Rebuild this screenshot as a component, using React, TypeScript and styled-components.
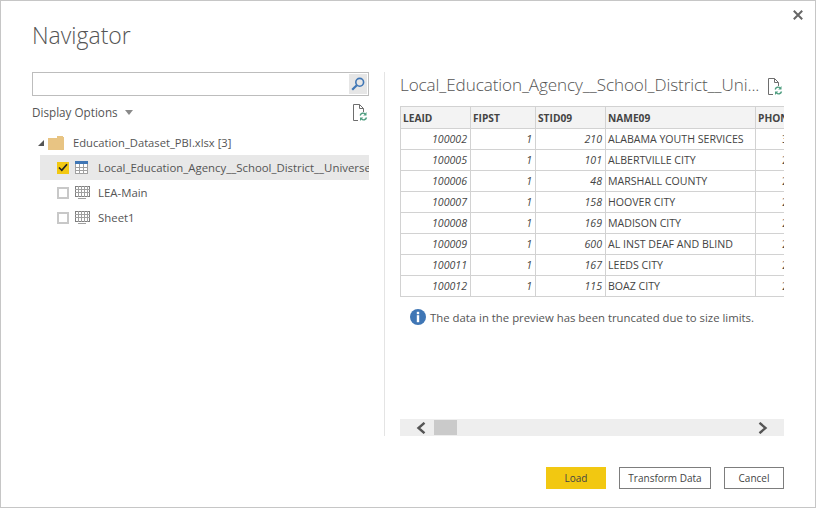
import React from "react";
import styled, { createGlobalStyle } from "styled-components";

const GlobalStyle = createGlobalStyle`
  html, body { margin: 0; padding: 0; background: #fff; }
  * { box-sizing: border-box; }
`;

const rows = [
  ["100002", "1", "210", "ALABAMA YOUTH SERVICES", "3"],
  ["100005", "1", "101", "ALBERTVILLE CITY", "2"],
  ["100006", "1", "48", "MARSHALL COUNTY", "2"],
  ["100007", "1", "158", "HOOVER CITY", "2"],
  ["100008", "1", "169", "MADISON CITY", "2"],
  ["100009", "1", "600", "AL INST DEAF AND BLIND", "2"],
  ["100011", "1", "167", "LEEDS CITY", "2"],
  ["100012", "1", "115", "BOAZ CITY", "2"],
];

const RefreshDoc = () => (
  <svg width="16" height="18" viewBox="0 0 16 18" fill="none">
    <path d="M6 16.5H1.5V0.5H7.5L11.5 4.5V8" stroke="#6e6e6e" />
    <path d="M7.5 0.5V4.5H11.5" stroke="#6e6e6e" />
    <path d="M8.2 11.5a3 3 0 0 1 5-1.5" stroke="#4f9e80" strokeWidth="1.4" />
    <path d="M14.5 8V11.5H11.2" fill="#4f9e80" />
    <path d="M14.5 13.5a3 3 0 0 1-5 1.5" stroke="#4f9e80" strokeWidth="1.4" />
    <path d="M8 17V13.5H11.3" fill="#4f9e80" />
  </svg>
);

const TableIcon = ({ selected }: { selected?: boolean }) =>
  selected ? (
    <svg width="13" height="13" viewBox="0 0 13 13" fill="none">
      <rect x="0.5" y="0.5" width="12" height="12" fill="#fff" stroke="#a0a0a0" />
      <rect x="0" y="0" width="13" height="3" fill="#3f76b5" />
      <path d="M4.5 3V13M8.5 3V13M0 6.5H13M0 9.5H13" stroke="#a0a0a0" />
    </svg>
  ) : (
    <svg width="15" height="13" viewBox="0 0 15 13" fill="none">
      <rect x="0.5" y="0.5" width="14" height="10" stroke="#808080" />
      <path
        d="M3.5 0V11M6.5 0V11M9.5 0V11M12.5 0V11M0 3.5H15M0 6.5H15M3 12.5H11"
        stroke="#a0a0a0"
      />
    </svg>
  );

const App = () => (
  <Window>
    <GlobalStyle />
    <CloseButton>
      <svg width="10" height="10" viewBox="0 0 10 10">
        <path d="M0.8 0.8L9.2 9.2M9.2 0.8L0.8 9.2" stroke="#666" strokeWidth="2" />
      </svg>
    </CloseButton>
    <Title>Navigator</Title>
    <Body>
      <LeftPane>
        <SearchBox>
          <SearchButton>
            <svg width="14" height="14" viewBox="0 0 14 14" fill="none">
              <circle cx="8.7" cy="5.3" r="3.9" stroke="#3f76b5" strokeWidth="1.6" />
              <path d="M5.8 8.2L1.2 12.8" stroke="#3f76b5" strokeWidth="2.2" />
            </svg>
          </SearchButton>
        </SearchBox>
        <OptionsRow>
          <DisplayOptions>
            Display Options <Caret />
          </DisplayOptions>
          <RefreshDoc />
        </OptionsRow>
        <FolderRow>
          <Expander />
          <Folder>
            <svg width="16" height="14" viewBox="0 0 16 14">
              <path d="M0 2H9V0H15V1H16V14H0Z" fill="#e8c483" />
            </svg>
          </Folder>
          <span>Education_Dataset_PBI.xlsx [3]</span>
        </FolderRow>
        <TreeRow $selected>
          <CheckBox $checked>
            <svg width="10" height="9" viewBox="0 0 10 9" fill="none">
              <path d="M1 4.5L3.8 7.3L9 1.2" stroke="#222" strokeWidth="1.7" />
            </svg>
          </CheckBox>
          <IconSlot>
            <TableIcon selected />
          </IconSlot>
          <TreeLabel>Local_Education_Agency__School_District__Universe_Survey</TreeLabel>
        </TreeRow>
        <TreeRow>
          <CheckBox />
          <IconSlot>
            <TableIcon />
          </IconSlot>
          <TreeLabel>LEA-Main</TreeLabel>
        </TreeRow>
        <TreeRow>
          <CheckBox />
          <IconSlot>
            <TableIcon />
          </IconSlot>
          <TreeLabel>Sheet1</TreeLabel>
        </TreeRow>
      </LeftPane>
      <RightPane>
        <PreviewHead>
          <PreviewTitle>Local_Education_Agency__School_District__Uni...</PreviewTitle>
          <RefreshDoc />
        </PreviewHead>
        <TableClip>
          <Table>
            <colgroup>
              <col width="70" />
              <col width="65" />
              <col width="70" />
              <col width="150" />
              <col width="60" />
            </colgroup>
            <thead>
              <tr>
                {["LEAID", "FIPST", "STID09", "NAME09", "PHONE"].map((h) => (
                  <Th key={h}>{h}</Th>
                ))}
              </tr>
            </thead>
            <tbody>
              {rows.map((r) => (
                <tr key={r[0]}>
                  <NumCell>{r[0]}</NumCell>
                  <NumCell>{r[1]}</NumCell>
                  <NumCell>{r[2]}</NumCell>
                  <TextCell>{r[3]}</TextCell>
                  <PhoneCell>{r[4]}</PhoneCell>
                </tr>
              ))}
            </tbody>
          </Table>
        </TableClip>
        <Notice>
          <svg width="16" height="16" viewBox="0 0 16 16">
            <circle cx="8" cy="8" r="8" fill="#3f76b5" />
            <rect x="6.8" y="2.8" width="2.4" height="2.4" fill="#fff" />
            <rect x="6.8" y="6.2" width="2.4" height="7" fill="#fff" />
          </svg>
          <span>The data in the preview has been truncated due to size limits.</span>
        </Notice>
        <ScrollBar>
          <ScrollArrow>
            <svg width="10" height="12" viewBox="0 0 10 12" fill="none">
              <path d="M8.5 0.8L2.5 6L8.5 11.2" stroke="#555" strokeWidth="2.4" />
            </svg>
          </ScrollArrow>
          <ScrollThumb />
          <ScrollArrow>
            <svg width="10" height="12" viewBox="0 0 10 12" fill="none">
              <path d="M1.5 0.8L7.5 6L1.5 11.2" stroke="#555" strokeWidth="2.4" />
            </svg>
          </ScrollArrow>
        </ScrollBar>
      </RightPane>
    </Body>
    <Footer>
      <PrimaryButton>Load</PrimaryButton>
      <Button $width={92}>Transform Data</Button>
      <Button $width={60}>Cancel</Button>
    </Footer>
  </Window>
);

export default App;

const uiFont = `"Open Sans", "Noto Sans", sans-serif`;

const Window = styled.div`
  position: relative;
  width: 816px;
  height: 508px;
  background: #fff;
  border: 1px solid #c6c6c6;
  display: flex;
  flex-direction: column;
  padding: 0 31px 18px 31px;
  font-family: ${uiFont};
  color: #444;
  overflow: hidden;
`;
const CloseButton = styled.div`
  position: absolute;
  top: 9px;
  right: 12px;
  width: 10px;
  height: 10px;
  line-height: 0;
`;
const Title = styled.div`
  margin-top: 18px;
  height: 32px;
  font-size: 23px;
  line-height: 32px;
  font-weight: 300;
  color: #555;
`;
const Body = styled.div`
  display: flex;
  margin-top: 21px;
  height: 364px;
`;
const LeftPane = styled.div`
  width: 353px;
  flex: none;
  padding-right: 15px;
  border-right: 1px solid #e4e4e4;
  margin-right: 15px;
`;
const SearchBox = styled.div`
  height: 24px;
  width: 337px;
  border: 1px solid #bdbdbd;
  display: flex;
  justify-content: flex-end;
  padding: 1px;
`;
const SearchButton = styled.div`
  width: 18px;
  height: 20px;
  background: #e6e6e6;
  display: flex;
  align-items: center;
  justify-content: center;
`;
const OptionsRow = styled.div`
  display: flex;
  justify-content: space-between;
  align-items: center;
  width: 337px;
  height: 20px;
  margin-top: 7px;
  svg {
    margin-right: 1px;
  }
`;
const DisplayOptions = styled.div`
  font-size: 11.7px;
  line-height: 16px;
  margin-top: -2px;
  color: #555;
  display: flex;
  align-items: center;
  gap: 6px;
`;
const Caret = styled.span`
  width: 0;
  height: 0;
  border-left: 4.5px solid transparent;
  border-right: 4.5px solid transparent;
  border-top: 5px solid #8a8a8a;
  margin-left: 1px;
`;
const FolderRow = styled.div`
  display: flex;
  align-items: center;
  height: 25px;
  margin-top: 7px;
  padding-left: 6px;
  font-size: 11.2px;
  color: #555;
`;
const Expander = styled.span`
  width: 0;
  height: 0;
  border-bottom: 6px solid #555;
  border-left: 6px solid transparent;
  margin-right: 4px;
`;
const Folder = styled.span`
  line-height: 0;
  margin-right: 9px;
`;
const TreeRow = styled.div<{ $selected?: boolean }>`
  display: flex;
  align-items: center;
  width: 329px;
  margin-left: 8px;
  height: 25px;
  padding-left: 17px;
  background: ${(p) => (p.$selected ? "#e8e8e8" : "transparent")};
`;
const CheckBox = styled.span<{ $checked?: boolean }>`
  width: 12px;
  height: 12px;
  flex: none;
  display: flex;
  align-items: center;
  justify-content: center;
  background: ${(p) => (p.$checked ? "#f2c811" : "#fff")};
  border: ${(p) => (p.$checked ? "none" : "2px solid #c8c8c8")};
`;
const IconSlot = styled.span`
  width: 15px;
  flex: none;
  margin-left: 6px;
  margin-right: 8px;
  line-height: 0;
`;
const TreeLabel = styled.span`
  font-size: 11.4px;
  color: #555;
  white-space: nowrap;
  overflow: hidden;
`;
const RightPane = styled.div`
  width: 384px;
  flex: none;
  display: flex;
  flex-direction: column;
`;
const PreviewHead = styled.div`
  display: flex;
  align-items: center;
  gap: 8px;
  height: 28px;
  margin-bottom: 6px;
  svg {
    flex: none;
    margin-top: 1px;
  }
`;
const PreviewTitle = styled.div`
  font-size: 17.1px;
  line-height: 24px;
  margin-top: -2px;
  font-weight: 300;
  color: #555;
  white-space: nowrap;
  letter-spacing: -0.1px;
`;
const TableClip = styled.div`
  width: 384px;
  overflow: hidden;
`;
const Table = styled.table`
  border-collapse: collapse;
  table-layout: fixed;
  width: 415px;
  font-size: 10.6px;
  color: #444;
  td,
  th {
    border: 1px solid #d2d2d2;
    height: 21px;
    padding: 0 3px 0 2px;
    white-space: nowrap;
    overflow: hidden;
  }
`;
const Th = styled.th`
  background: #f3f3f3;
  text-align: left;
  font-size: 10.2px;
  font-weight: 700;
  color: #444;
  height: 22px !important;
`;
const NumCell = styled.td`
  text-align: right;
  font-style: italic;
`;
const TextCell = styled.td`
  text-align: left;
`;
const PhoneCell = styled.td`
  text-align: right;
  padding-right: 27px !important;
`;
const Notice = styled.div`
  display: flex;
  align-items: center;
  gap: 4px;
  margin: 12px 0 0 10px;
  height: 18px;
  font-size: 11.35px;
  color: #555;
  svg {
    margin-top: -2px;
  }
  span {
    margin-top: -1px;
  }
`;
const ScrollBar = styled.div`
  margin-top: auto;
  height: 17px;
  background: #eeeeee;
  display: flex;
  align-items: center;
  padding: 0 16px;
  position: relative;
`;
const ScrollArrow = styled.span`
  line-height: 0;
  width: 10px;
  &:last-child {
    margin-left: auto;
  }
`;
const ScrollThumb = styled.span`
  width: 23px;
  height: 15px;
  margin-left: 8px;
  background: #cacaca;
`;
const Footer = styled.div`
  margin-top: auto;
  display: flex;
  justify-content: flex-end;
  gap: 13px;
`;
const Button = styled.div<{ $width: number }>`
  width: ${(p) => p.$width}px;
  height: 22px;
  border: 1px solid #7d7d7d;
  display: flex;
  align-items: center;
  justify-content: center;
  font-size: 10px;
  color: #444;
  background: #fff;
`;
const PrimaryButton = styled.div`
  width: 60px;
  height: 22px;
  background: #f2c811;
  display: flex;
  align-items: center;
  justify-content: center;
  font-size: 10px;
  color: #444;
`;
